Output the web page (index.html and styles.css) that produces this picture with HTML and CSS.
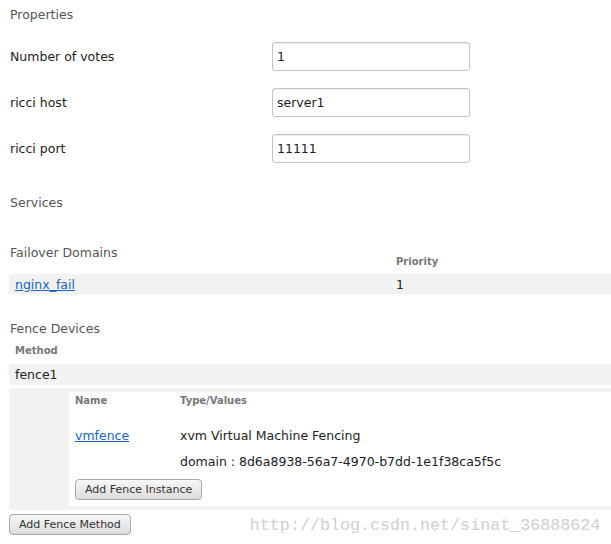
FILE: index.html
```html
<!DOCTYPE html>
<html lang="en">
<head>
    <meta charset="UTF-8">
    <title>Node Properties</title>
    <link rel="stylesheet" href="styles.css">
</head>
<body>
    <div class="page">
        <h3 class="section-title">Properties</h3>
        <div class="props">
            <label class="prop-label">Number of votes</label>
            <input class="prop-input" type="text" value="1">
            <label class="prop-label">ricci host</label>
            <input class="prop-input" type="text" value="server1">
            <label class="prop-label">ricci port</label>
            <input class="prop-input" type="text" value="11111">
        </div>

        <h3 class="section-title services">Services</h3>

        <div class="domain-head">
            <h3 class="section-title">Failover Domains</h3>
            <span class="col-head">Priority</span>
        </div>
        <div class="domain-row">
            <a href="#" class="link">nginx_fail</a>
            <span>1</span>
        </div>

        <h3 class="section-title fence-title">Fence Devices</h3>
        <div class="col-head method-head">Method</div>
        <div class="method-row">fence1</div>
        <div class="method-block">
            <div class="instances">
                <div class="inst-grid">
                    <span class="col-head">Name</span>
                    <span class="col-head">Type/Values</span>
                </div>
                <div class="inst-grid inst-row">
                    <a href="#" class="link">vmfence</a>
                    <div class="inst-values">
                        <span>xvm Virtual Machine Fencing</span>
                        <span>domain : 8d6a8938-56a7-4970-b7dd-1e1f38ca5f5c</span>
                    </div>
                </div>
                <button class="btn">Add Fence Instance</button>
            </div>
        </div>
        <div class="footer">
            <button class="btn">Add Fence Method</button>
            <span class="watermark">http://blog.csdn.net/sinat_36888624</span>
        </div>
    </div>
</body>
</html>
```

FILE: styles.css
```css
body {
    margin: 0;
    background: #fff;
    color: #222;
    font-family: "DejaVu Sans", sans-serif;
    font-size: 12.5px;
}

.page {
    padding: 7px 0 0 9px;
}

.section-title {
    margin: 0;
    padding-left: 1px;
    font-size: 12.5px;
    font-weight: normal;
    line-height: 15px;
    color: #555;
}

.props {
    display: grid;
    grid-template-columns: 263px 198px;
    row-gap: 17px;
    margin-top: 20px;
    align-items: center;
}

.prop-label {
    padding-left: 1px;
    line-height: 15px;
}

.prop-input {
    box-sizing: border-box;
    height: 29px;
    width: 198px;
    margin: 0;
    padding: 0 4px;
    border: 1px solid #c4c4c4;
    border-radius: 3px;
    box-shadow: inset 0 1px 1px rgba(0, 0, 0, 0.08);
    font-family: "DejaVu Sans", sans-serif;
    font-size: 12.5px;
    color: #222;
}

.services {
    margin-top: 32px;
}

.domain-head {
    display: grid;
    grid-template-columns: 387px 1fr;
    height: 29px;
    margin-top: 35px;
}

.domain-head .section-title {
    align-self: start;
}

.col-head {
    font-size: 10px;
    font-weight: bold;
    line-height: 12px;
    color: #777;
}

.domain-head .col-head {
    align-self: end;
    padding-bottom: 6px;
}

.domain-row {
    display: grid;
    grid-template-columns: 381px 1fr;
    align-items: center;
    height: 20px;
    padding-left: 6px;
    background: #f2f2f2;
    line-height: 15px;
}

.link {
    color: #1566c7;
    text-decoration: underline;
}

.fence-title {
    margin-top: 27px;
}

.method-head {
    margin-top: 9px;
    padding-left: 6px;
}

.method-row {
    margin-top: 7px;
    height: 21px;
    line-height: 21px;
    padding-left: 6px;
    background: #f2f2f2;
}

.method-block {
    margin-top: 3px;
    padding: 4px 0 4px 60px;
    background: #f2f2f2;
}

.instances {
    height: 114px;
    padding: 3px 0 0 6px;
    box-sizing: border-box;
    background: #fff;
}

.inst-grid {
    display: grid;
    grid-template-columns: 105px 1fr;
}

.inst-row {
    margin-top: 21px;
    line-height: 15px;
}

.inst-values {
    display: flex;
    flex-direction: column;
    gap: 11px;
}

.btn {
    height: 21px;
    margin-top: 10px;
    padding: 0 9px;
    border: 1px solid #a8a8a8;
    border-radius: 4px;
    background: linear-gradient(to bottom, #f7f7f7, #dcdcdc);
    font-family: "DejaVu Sans", sans-serif;
    font-size: 11px;
    color: #333;
}

.footer {
    display: flex;
    align-items: center;
    gap: 119px;
    margin-top: 3px;
}

.footer .btn {
    margin-top: 0;
}

.watermark {
    font-family: "Liberation Mono", monospace;
    font-size: 16.7px;
    color: #d0d0d0;
    margin-top: 3px;
}
```
